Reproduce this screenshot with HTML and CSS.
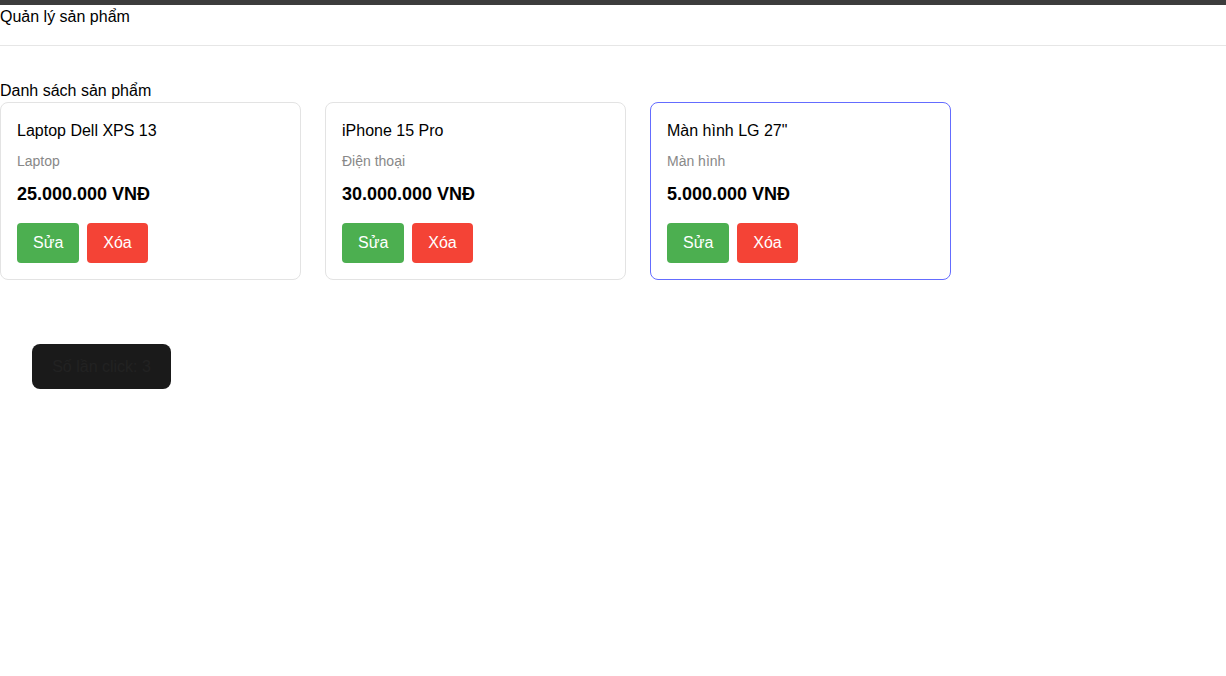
FILE: index.html
```html
<!DOCTYPE html>
<html lang="vi">
<head>
<meta charset="utf-8">
<title>Quản lý sản phẩm</title>
<link rel="stylesheet" href="styles.css">
</head>
<body>
<div class="topbar"></div>
<header class="header">Quản lý sản phẩm</header>
<main class="main">
  <div class="list-title">Danh sách sản phẩm</div>
  <div class="cards">
    <div class="card">
      <div class="card-name">Laptop Dell XPS 13</div>
      <div class="card-cat">Laptop</div>
      <div class="card-price">25.000.000 VNĐ</div>
      <div class="card-actions">
        <button class="btn btn-edit">Sửa</button>
        <button class="btn btn-del">Xóa</button>
      </div>
    </div>
    <div class="card">
      <div class="card-name">iPhone 15 Pro</div>
      <div class="card-cat">Điện thoại</div>
      <div class="card-price">30.000.000 VNĐ</div>
      <div class="card-actions">
        <button class="btn btn-edit">Sửa</button>
        <button class="btn btn-del">Xóa</button>
      </div>
    </div>
    <div class="card card-active">
      <div class="card-name">Màn hình LG 27"</div>
      <div class="card-cat">Màn hình</div>
      <div class="card-price">5.000.000 VNĐ</div>
      <div class="card-actions">
        <button class="btn btn-edit">Sửa</button>
        <button class="btn btn-del">Xóa</button>
      </div>
    </div>
  </div>
  <div class="counter-wrap">
    <button class="counter">Số lần click: 3</button>
  </div>
</main>
</body>
</html>
```
FILE: styles.css
```css
* { box-sizing: border-box; }
html, body {
  margin: 0;
  padding: 0;
  background: #ffffff;
  color: #000000;
  font-family: "Liberation Sans", Arial, sans-serif;
  font-size: 16px;
}
.topbar {
  height: 5px;
  background: #3c3c3c;
}
.header {
  line-height: 24px;
  padding-bottom: 16px;
  border-bottom: 1px solid #e6e6e6;
}
.main {
  padding-top: 33px;
}
.list-title {
  line-height: 23px;
}
.cards {
  display: flex;
  gap: 24px;
}
.card {
  width: 301px;
  border: 1px solid #e3e3e3;
  border-radius: 8px;
  padding: 16px;
}
.card-active {
  border-color: #646cff;
}
.card-name {
  font-size: 16px;
  line-height: 24px;
}
.card-cat {
  margin-top: 8px;
  font-size: 14px;
  line-height: 21px;
  color: #888888;
}
.card-price {
  margin-top: 9px;
  font-size: 18px;
  line-height: 27px;
  font-weight: bold;
}
.card-actions {
  margin-top: 15px;
  display: flex;
  gap: 8px;
}
.btn {
  height: 40px;
  padding: 0 16px;
  border: none;
  border-radius: 4px;
  color: #ffffff;
  font-family: "Liberation Sans", Arial, sans-serif;
  font-size: 16px;
  cursor: pointer;
}
.btn-edit { background: #4caf50; }
.btn-del { background: #f44336; }
.counter-wrap {
  padding: 64px 32px 0;
}
.counter {
  border-radius: 8px;
  border: 1px solid transparent;
  padding: 9.6px 19.2px;
  line-height: 24px;
  font-size: 16px;
  font-weight: 500;
  font-family: "Liberation Sans", Arial, sans-serif;
  background: #1a1a1a;
  color: #222222;
  cursor: pointer;
}
```
